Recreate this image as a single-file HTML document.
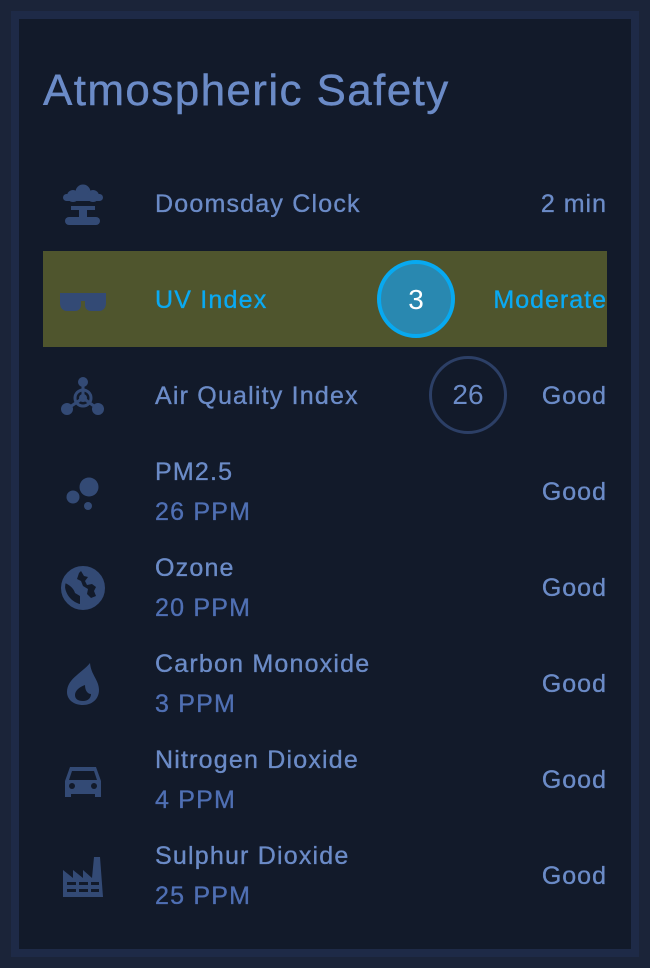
<!DOCTYPE html>
<html><head><style>
*{margin:0;padding:0;box-sizing:border-box}
body{width:650px;height:968px;background:#1b2439;font-family:"Liberation Sans",sans-serif;position:relative;overflow:hidden}
.card{position:absolute;left:11px;top:11px;width:628px;height:946px;border:8px solid #1e2a47;background:#121a2a}
h1{position:absolute;left:43px;top:66px;font-size:44px;font-weight:normal;color:#6b8bc7;letter-spacing:1.4px;-webkit-text-stroke:0.4px #6b8bc7}
.row{position:absolute;left:43px;width:564px;height:96px}
.row.hl{background:#4f552d}
.ic{position:absolute;left:16px;top:24px;width:48px;height:48px}
.lab,.sub,.val{position:absolute;font-size:25px;letter-spacing:1.2px;-webkit-text-stroke:0.35px currentColor}
.lab{left:112px;color:#6b8bc7}
.sub{left:112px;color:#4f6fb3}
.val{right:0;color:#6b8bc7;letter-spacing:1px}
.circ{position:absolute;width:78px;height:78px;border-radius:50%;top:9px;text-align:center;line-height:72px;font-size:28px}
</style></head><body>
<div class="card"></div>
<h1>Atmospheric Safety</h1>

<div class="row" style="top:155px">
<svg class="ic" viewBox="0 0 48 48"><g fill="#334a75"><circle cx="24" cy="13" r="7.5"/><circle cx="14" cy="17" r="6"/><circle cx="34" cy="17" r="6"/><rect x="4" y="15" width="40" height="7" rx="3.5"/><rect x="12" y="27" width="24" height="4"/><rect x="20" y="27" width="8" height="13"/><rect x="6" y="38" width="35" height="8" rx="4"/></g></svg>
<div class="lab" style="top:35px">Doomsday Clock</div>
<div class="val" style="top:35px">2 min</div>
</div>

<div class="row hl" style="top:251px">
<svg class="ic" viewBox="0 0 48 48"><path fill="#334a75" d="M1 18H47V28c0 5-3 8-7 8h-8c-4 0-6-3-6-6v-4h-4v4c0 3-2 6-6 6H8c-4 0-7-3-7-8z"/></svg>
<div class="lab" style="top:35px;color:#0aa9f2">UV Index</div>
<div class="circ" style="left:334px;background:#2988b0;border:4px solid #08a9f0;color:#fff">3</div>
<div class="val" style="top:35px;color:#0aa9f2">Moderate</div>
</div>

<div class="row" style="top:347px">
<svg class="ic" viewBox="0 0 48 48"><g fill="#334a75" stroke="#334a75"><circle cx="24" cy="11" r="5" stroke="none"/><circle cx="8" cy="38" r="6" stroke="none"/><circle cx="39" cy="38" r="6" stroke="none"/><circle cx="24" cy="27" r="4" stroke="none"/><line x1="24" y1="11" x2="24" y2="27" stroke-width="3"/><line x1="8" y1="38" x2="24" y2="27" stroke-width="3"/><line x1="39" y1="38" x2="24" y2="27" stroke-width="3"/><circle cx="24" cy="27" r="8" fill="none" stroke-width="3"/></g></svg>
<div class="lab" style="top:35px">Air Quality Index</div>
<div class="circ" style="left:386px;border:3px solid #2c3f66;color:#6b8bc7;line-height:72px">26</div>
<div class="val" style="top:35px">Good</div>
</div>

<div class="row" style="top:443px">
<svg class="ic" viewBox="0 0 48 48"><g fill="#334a75"><circle cx="30" cy="20" r="9.5"/><circle cx="14" cy="30" r="6.5"/><circle cx="29" cy="39" r="4"/></g></svg>
<div class="lab" style="top:15px">PM2.5</div><div class="sub" style="top:55px">26 PPM</div>
<div class="val" style="top:35px">Good</div>
</div>

<div class="row" style="top:539px">
<svg class="ic" viewBox="0 0 48 48"><circle cx="24" cy="25" r="20" fill="#334a75"/><path fill="#121a2a" d="M6 20c5 2 9 6 10 10l5 3v8c-8-2-14-9-15-17zM22 8l3 5 4 1-3 4 2 4 5-1 4 3-2 4 2 5-5 2-4-4 1-5-5-3-2-5-4-2 2-6z"/><circle cx="24" cy="25" r="20" fill="none" stroke="#334a75" stroke-width="4"/></svg>
<div class="lab" style="top:15px">Ozone</div><div class="sub" style="top:55px">20 PPM</div>
<div class="val" style="top:35px">Good</div>
</div>

<div class="row" style="top:635px">
<svg class="ic" viewBox="0 0 48 48"><path fill="#334a75" d="M31 4c-4 5-10 9-13 12-6 5-10 10-10 17 0 8 7 13 16 13s16-6 16-15c0-10-8-15-9-27z"/><path fill="#121a2a" d="M26 26c-6 2-10 6-10 10 0 4 3 6 8 6 5 0 8-3 8-7-3 0-6-3-6-9z"/></svg>
<div class="lab" style="top:15px">Carbon Monoxide</div><div class="sub" style="top:55px">3 PPM</div>
<div class="val" style="top:35px">Good</div>
</div>

<div class="row" style="top:731px">
<svg class="ic" viewBox="0 0 48 48"><path fill="#334a75" d="M11 12h26l5 14v16h-6v-3H12v3H6V26zM13 16l-3 9h28l-3-9z"/><circle cx="13" cy="31" r="3" fill="#121a2a"/><circle cx="35" cy="31" r="3" fill="#121a2a"/></svg>
<div class="lab" style="top:15px">Nitrogen Dioxide</div><div class="sub" style="top:55px">4 PPM</div>
<div class="val" style="top:35px">Good</div>
</div>

<div class="row" style="top:827px">
<svg class="ic" viewBox="0 0 48 48"><path fill="#334a75" d="M4 19l10 8v-8l10 8v-8l9 8 2-21h6l3 40H4z"/><g fill="#121a2a"><rect x="8" y="31" width="9" height="3"/><rect x="20" y="31" width="9" height="3"/><rect x="32" y="31" width="8" height="3"/><rect x="8" y="38" width="9" height="3"/><rect x="20" y="38" width="9" height="3"/><rect x="32" y="38" width="8" height="3"/></g></svg>
<div class="lab" style="top:15px">Sulphur Dioxide</div><div class="sub" style="top:55px">25 PPM</div>
<div class="val" style="top:35px">Good</div>
</div>
</body></html>
